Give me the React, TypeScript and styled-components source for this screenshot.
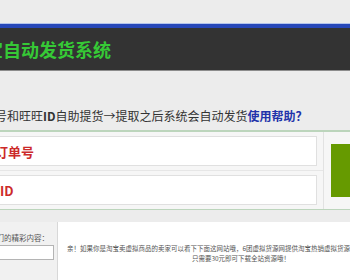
import React from 'react';
import styled, { createGlobalStyle } from 'styled-components';

const GlobalStyle = createGlobalStyle`
  html, body {
    margin: 0;
    padding: 0;
    overflow: hidden;
    background: #ececec;
  }
  body {
    font-family: "Noto Sans CJK SC", "Noto Sans", sans-serif;
  }
`;

const Viewport = styled.div`
  width: 350px;
  height: 280px;
  overflow: hidden;
`;

// the screenshot is a crop of a wider page, so the canvas starts left of the window
const Canvas = styled.div`
  width: 560px;
  margin-left: -100px;
  padding-top: 24px;
`;

const HeaderBar = styled.header`
  box-sizing: border-box;
  height: 47px;
  display: flex;
  align-items: center;
  padding-left: 67px;
  background: #333333;
  border-top: 4px solid #2747b8;
  border-bottom: 1px solid #8c8c8c;
  box-shadow: 0 -1px 0 #b4c4ec;
`;

const Title = styled.h1`
  margin: 0;
  font-size: 18px;
  line-height: 1;
  font-weight: 700;
  color: #36c936;
`;

const Intro = styled.p`
  margin: 37px 0 0;
  padding-left: 71px;
  font-size: 12px;
  line-height: 16px;
  color: #333;
  white-space: nowrap;
`;

const Strong = styled.b`
  font-weight: 700;
  color: ${({ color }) => color || '#333'};
`;

const MainPanel = styled.section`
  display: flex;
  margin-top: 6px;
  background: #f6f6f6;
  border-top: 2px solid #bcd5bc;
  border-bottom: 1px solid #bcd5bc;
`;

const Fields = styled.div`
  width: 423px;
  border-right: 1px solid #e2e2e2;
`;

const FieldRow = styled.div`
  padding: 4px 0 4px 30px;
  border-bottom: 1px solid #e6e6e6;

  &:last-child {
    border-bottom: none;
  }
`;

const FieldBox = styled.div`
  box-sizing: border-box;
  width: 387px;
  height: 30px;
  display: flex;
  align-items: center;
  background: #ffffff;
  border: 1px solid #e0e0e0;
`;

const FieldLabel = styled.span<{ $indent: number }>`
  padding-left: ${({ $indent }) => $indent}px;
  font-size: 13px;
  font-weight: 700;
  color: #cc2a2a;
`;

const ButtonCell = styled.div`
  display: flex;
  align-items: center;
  padding-left: 7px;
`;

const SubmitButton = styled.button`
  width: 110px;
  height: 53px;
  border: none;
  padding: 0;
  background: #669a00;
  cursor: pointer;
`;

const Bottom = styled.section`
  display: flex;
  margin-top: 12px;
  height: 80px;
  background: #ffffff;
`;

const Sidebar = styled.aside`
  box-sizing: border-box;
  width: 158px;
  padding: 11px 0 0 74px;
  background: #f1f1f1;
  border-right: 1px solid #d8d8d8;
`;

const SideLabel = styled.div`
  font-size: 7.5px;
  line-height: 9px;
  color: #555;
  white-space: nowrap;
`;

const SearchInput = styled.input`
  box-sizing: border-box;
  display: block;
  width: 80px;
  height: 15px;
  margin-top: 3px;
  border: 1px solid #b4b4b4;
  background: #fff;
`;

const Notice = styled.p`
  width: 362px;
  margin: 0;
  padding: 22px 0 0 2px;
  font-size: 6.5px;
  line-height: 9.5px;
  color: #555;
  text-align: center;
`;

const Line = styled.span`
  display: block;
  white-space: nowrap;
`;

export default function App() {
  return (
    <Viewport>
      <GlobalStyle />
      <Canvas>
        <HeaderBar>
          <Title>淘宝自动发货系统</Title>
        </HeaderBar>

        <Intro>
          订单号和旺旺<Strong>ID</Strong>自助提货→提取之后系统会自动发货
          <Strong color="#2233aa">使用帮助？</Strong>
        </Intro>

        <MainPanel>
          <Fields>
            <FieldRow>
              <FieldBox>
                <FieldLabel $indent={38}>淘宝订单号</FieldLabel>
              </FieldBox>
            </FieldRow>
            <FieldRow>
              <FieldBox>
                <FieldLabel $indent={43}>旺旺ID</FieldLabel>
              </FieldBox>
            </FieldRow>
          </Fields>
          <ButtonCell>
            <SubmitButton type="button" aria-label="提货" />
          </ButtonCell>
        </MainPanel>

        <Bottom>
          <Sidebar>
            <SideLabel>搜索我们的精彩内容：</SideLabel>
            <SearchInput type="text" />
          </Sidebar>
          <Notice>
            <Line>亲！如果你是淘宝卖虚拟商品的卖家可以看下下面这网站哦，6团虚拟货源网提供淘宝热销虚拟货源，全站货源自动发货，</Line>
            <Line>只需要30元即可下载全站资源哦！</Line>
          </Notice>
        </Bottom>
      </Canvas>
    </Viewport>
  );
}
